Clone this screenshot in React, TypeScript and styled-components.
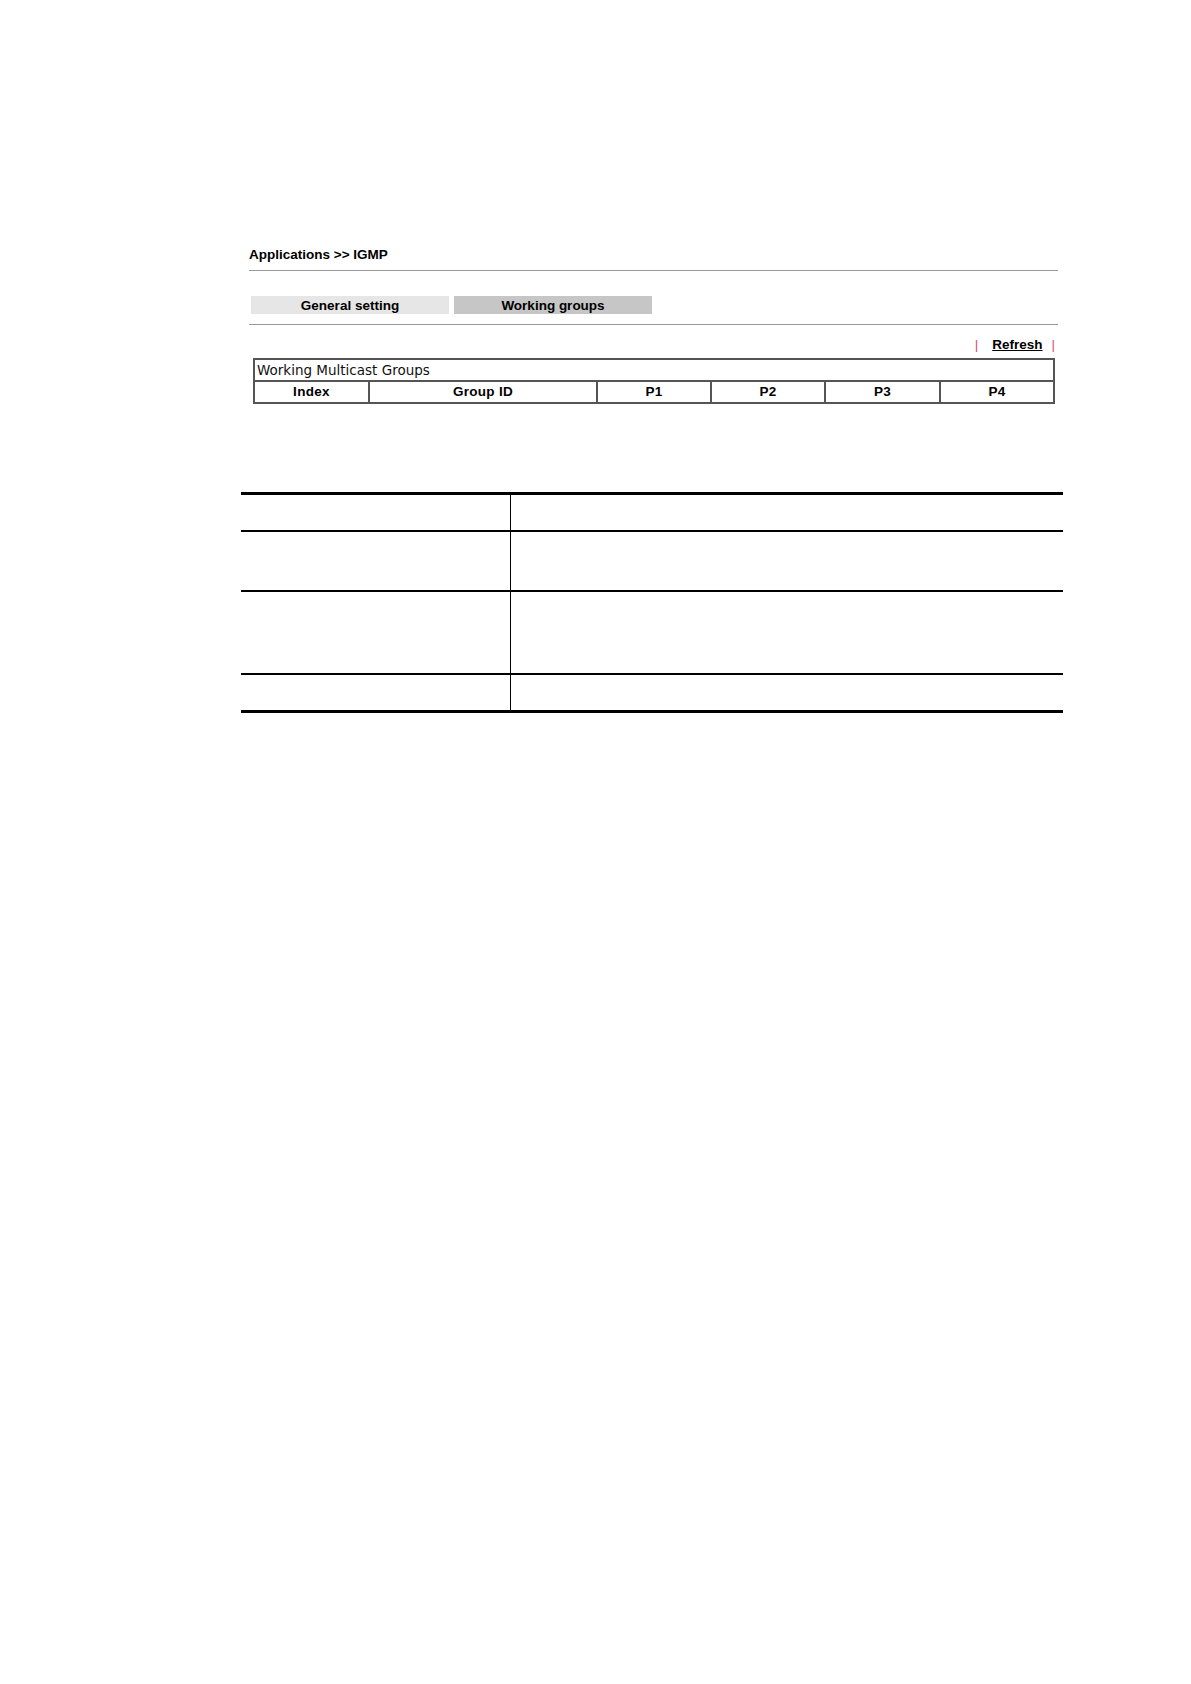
import React from "react";
import styled, { createGlobalStyle } from "styled-components";

const Global = createGlobalStyle`
  html, body { margin: 0; padding: 0; background: #ffffff; }
  body { font-family: "Liberation Sans", Arial, sans-serif; color: #000; }
`;

const Page = styled.div`
  padding-top: 246px;
  min-height: 1684px;
  box-sizing: border-box;
`;

const Panel = styled.section`
  margin-left: 249px;
  width: 809px;
`;

const Title = styled.div`
  height: 24px;
  line-height: 17px;
  font-size: 13.5px;
  font-weight: bold;
  border-bottom: 1px solid #9a9a9a;
  box-sizing: content-box;
`;

const TabBar = styled.div`
  display: flex;
  gap: 5px;
  margin-top: 25px;
  padding: 0 0 10px 2px;
  border-bottom: 1px solid #9a9a9a;
`;

const Tab = styled.div<{ $active?: boolean }>`
  width: 198px;
  height: 18px;
  line-height: 19px;
  text-align: center;
  font-size: 13.5px;
  font-weight: bold;
  background: ${(p) => (p.$active ? "#c6c6c6" : "#e6e6e6")};
`;

const RefreshRow = styled.div`
  height: 27px;
  padding-top: 6px;
  display: flex;
  justify-content: flex-end;
  align-items: center;
  padding-right: 3px;
  font-size: 13.5px;
  font-weight: bold;
`;

const Pipe = styled.span<{ $side: "left" | "right" }>`
  color: #d4506e;
  font-weight: normal;
  margin: ${(p) => (p.$side === "left" ? "0 14px 0 0" : "0 0 0 9px")};
`;

const RefreshLink = styled.a`
  color: #000;
  text-decoration: underline;
  cursor: pointer;
`;

const GroupTable = styled.table`
  margin-left: 4px;
  width: 800px;
  border-collapse: collapse;
  border: 2px solid #555;
  table-layout: fixed;
`;

const Col = styled.col<{ $w: number }>`
  width: ${(p) => p.$w}px;
`;

const CaptionCell = styled.td`
  border: 2px solid #555;
  height: 20px;
  padding: 0 0 0 2px;
  font-family: "DejaVu Sans", Verdana, sans-serif;
  font-size: 13.5px;
  line-height: 20px;
  text-align: left;
  color: #111;
`;

const HeadCell = styled.th`
  border: 2px solid #555;
  height: 20px;
  padding: 0;
  font-size: 13.5px;
  font-weight: bold;
  line-height: 20px;
  letter-spacing: 0.3px;
  text-align: center;
`;

const DescTable = styled.div`
  margin: 88px 0 0 241px;
  width: 822px;
  border-top: 3px solid #000;
  border-bottom: 3px solid #000;
`;

const DescRow = styled.div<{ $h: number; $last?: boolean }>`
  display: grid;
  grid-template-columns: 270px 1fr;
  height: ${(p) => p.$h}px;
  border-bottom: ${(p) => (p.$last ? "none" : "2px solid #000")};
`;

const DescKey = styled.div`
  border-right: 1px solid #000;
`;

const DescValue = styled.div``;

const columns: { label: string; w: number }[] = [
  { label: "Index", w: 115 },
  { label: "Group ID", w: 228 },
  { label: "P1", w: 114 },
  { label: "P2", w: 114 },
  { label: "P3", w: 115 },
  { label: "P4", w: 114 },
];

const descRows = [35, 58, 81, 35];

export default function App() {
  return (
    <>
      <Global />
      <Page>
        <Panel>
          <Title>Applications &gt;&gt; IGMP</Title>
          <TabBar>
            <Tab>General setting</Tab>
            <Tab $active>Working groups</Tab>
          </TabBar>
          <RefreshRow>
            <Pipe $side="left">|</Pipe>
            <RefreshLink>Refresh</RefreshLink>
            <Pipe $side="right">|</Pipe>
          </RefreshRow>
          <GroupTable>
            <colgroup>
              {columns.map((c) => (
                <Col key={c.label} $w={c.w} />
              ))}
            </colgroup>
            <tbody>
              <tr>
                <CaptionCell colSpan={6}>Working Multicast Groups</CaptionCell>
              </tr>
              <tr>
                {columns.map((c) => (
                  <HeadCell key={c.label}>{c.label}</HeadCell>
                ))}
              </tr>
            </tbody>
          </GroupTable>
        </Panel>
        <DescTable>
          {descRows.map((h, i) => (
            <DescRow key={i} $h={h} $last={i === descRows.length - 1}>
              <DescKey />
              <DescValue />
            </DescRow>
          ))}
        </DescTable>
      </Page>
    </>
  );
}
